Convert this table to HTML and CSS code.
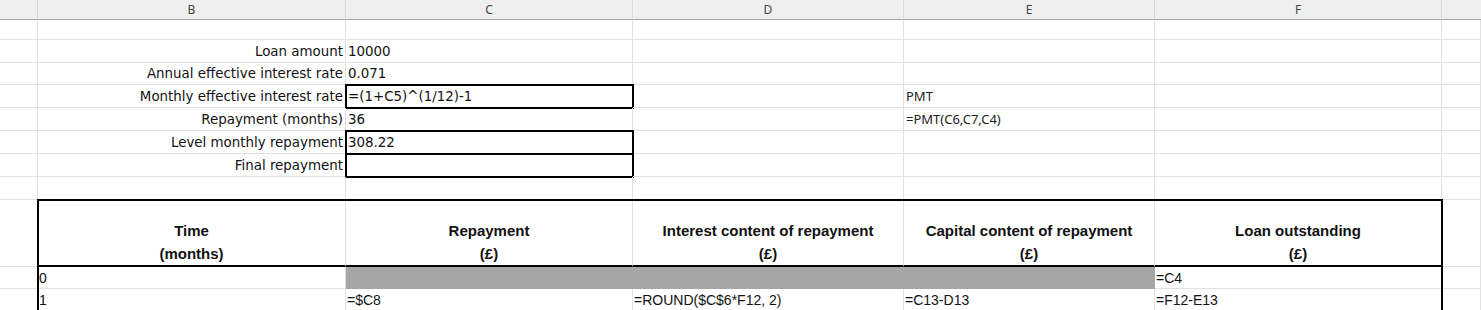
FILE: index.html
```html
<!DOCTYPE html>
<html lang="en">
<head>
<meta charset="utf-8">
<title>Loan schedule</title>
<link rel="stylesheet" href="styles.css">
</head>
<body>
<div class="sheet">
  <div class="ch"></div><div class="ch">B</div><div class="ch">C</div><div class="ch">D</div><div class="ch">E</div><div class="ch">F</div><div class="ch last"></div>

  <div class="c"></div><div class="c"></div><div class="c"></div><div class="c"></div><div class="c"></div><div class="c"></div><div class="c"></div>

  <div class="c"></div><div class="c lbl">Loan amount</div><div class="c val">10000</div><div class="c"></div><div class="c"></div><div class="c"></div><div class="c"></div>

  <div class="c"></div><div class="c lbl">Annual effective interest rate</div><div class="c val">0.071</div><div class="c"></div><div class="c"></div><div class="c"></div><div class="c"></div>

  <div class="c"></div><div class="c lbl">Monthly effective interest rate</div><div class="c val box">=(1+C5)^(1/12)-1</div><div class="c"></div><div class="c note">PMT</div><div class="c"></div><div class="c"></div>

  <div class="c"></div><div class="c lbl">Repayment (months)</div><div class="c val">36</div><div class="c"></div><div class="c note">=PMT(C6,C7,C4)</div><div class="c"></div><div class="c"></div>

  <div class="c"></div><div class="c lbl">Level monthly repayment</div><div class="c val box">308.22</div><div class="c"></div><div class="c"></div><div class="c"></div><div class="c"></div>

  <div class="c"></div><div class="c lbl">Final repayment</div><div class="c val box"></div><div class="c"></div><div class="c"></div><div class="c"></div><div class="c"></div>

  <div class="c"></div><div class="c"></div><div class="c"></div><div class="c"></div><div class="c"></div><div class="c"></div><div class="c"></div>

  <div class="c side r10"></div>
  <div class="c side r11"></div>
  <div class="c side r12"></div>
  <div class="c sideg r10"></div>
  <div class="c sideg r11"></div>
  <div class="c sideg r12"></div>

  <div class="tbl">
    <div class="th"><span>Time</span><span>(months)</span></div>
    <div class="th"><span>Repayment</span><span>(£)</span></div>
    <div class="th"><span>Interest content of repayment</span><span>(£)</span></div>
    <div class="th"><span>Capital content of repayment</span><span>(£)</span></div>
    <div class="th"><span>Loan outstanding</span><span>(£)</span></div>

    <div class="td">0</div>
    <div class="td fill"></div>
    <div class="td fill"></div>
    <div class="td fill"></div>
    <div class="td">=C4</div>

    <div class="td">1</div>
    <div class="td">=$C8</div>
    <div class="td">=ROUND($C$6*F12, 2)</div>
    <div class="td">=C13-D13</div>
    <div class="td">=F12-E13</div>
  </div>
</div>
</body>
</html>
```

FILE: styles.css
```css
html, body {
  margin: 0;
  padding: 0;
  background: #ffffff;
}

body {
  width: 1481px;
  height: 310px;
  overflow: hidden;
  font-family: "Liberation Sans", Arial, sans-serif;
  color: #000;
}

.sheet {
  display: grid;
  grid-template-columns: 38px 308px 287px 271px 251px 287px 1fr;
  grid-template-rows: 20px 20px 23px 22px 23px 23px 23px 23px 23px 67px 22px 22px;
}

.ch {
  background: #efefef;
  border-right: 1px solid #d9d9d9;
  border-bottom: 1px solid #a3a3a3;
  font-family: "Noto Sans", "Open Sans", sans-serif;
  font-size: 12px;
  color: #444;
  display: flex;
  align-items: center;
  justify-content: center;
  line-height: 1;
  padding-top: 1px;
}

.ch.last {
  border-right: none;
}

.c {
  border-right: 1px solid #e1e1e1;
  border-bottom: 1px solid #e1e1e1;
  display: flex;
  align-items: center;
  white-space: nowrap;
  overflow: hidden;
}

.lbl {
  justify-content: flex-end;
  padding-right: 2px;
  font-family: "DejaVu Sans", sans-serif;
  font-size: 13.4px;
  color: #111;
}

.val {
  padding-left: 2px;
  font-family: "DejaVu Sans", sans-serif;
  font-size: 13.4px;
  color: #111;
  overflow: visible;
}

.box {
  outline: 2px solid #000;
  outline-offset: -1px;
}

.note {
  padding-left: 2px;
  font-family: "Noto Sans", "Open Sans", sans-serif;
  font-size: 13px;
  color: #222;
}

.side { grid-column: 1; }
.sideg { grid-column: 7; }
.r10 { grid-row: 10; }
.r11 { grid-row: 11; }
.r12 { grid-row: 12; }

.tbl {
  grid-column: 2 / 7;
  grid-row: 10 / 13;
  display: grid;
  grid-template-columns: 308px 287px 271px 251px 287px;
  grid-template-rows: 67px 22px 22px;
  outline: 2px solid #000;
  outline-offset: -1px;
}

.th {
  border-right: 1px solid #e1e1e1;
  border-bottom: 2px solid #000;
  display: flex;
  flex-direction: column;
  justify-content: flex-end;
  align-items: center;
  font-weight: bold;
  font-size: 15px;
  line-height: 23px;
  color: #111;
}

.td {
  border-right: 1px solid #e1e1e1;
  border-bottom: 1px solid #e1e1e1;
  display: flex;
  align-items: center;
  padding-left: 1px;
  font-size: 14px;
  white-space: nowrap;
  color: #111;
}

.td.fill {
  background: #a6a6a6;
  border-right-color: #a6a6a6;
  border-bottom-color: #a6a6a6;
}
```
